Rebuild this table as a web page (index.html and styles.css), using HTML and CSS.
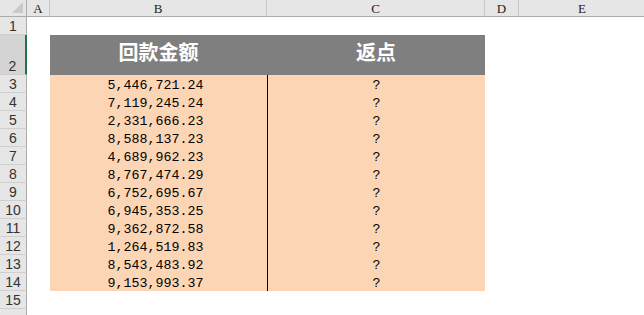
FILE: index.html
```html
<!DOCTYPE html>
<html>
<head>
<meta charset="utf-8">
<link rel="stylesheet" href="styles.css">
</head>
<body>
<div class="sheet">
  <div class="ch corner"><span class="tri"></span></div>
  <div class="ch">A</div>
  <div class="ch">B</div>
  <div class="ch">C</div>
  <div class="ch">D</div>
  <div class="ch last">E</div>

  <div class="rh r1">1</div><div class="c r1"></div><div class="c r1"></div><div class="c r1"></div><div class="c r1"></div><div class="c r1"></div>

  <div class="rh r2 sel">2</div><div class="c r2"></div><div class="c r2 th">回款金额</div><div class="c r2 th">返点</div><div class="c r2"></div><div class="c r2"></div>

  <div class="rh">3</div><div class="c"></div><div class="c num">5,446,721.24</div><div class="c q">?</div><div class="c"></div><div class="c"></div>
  <div class="rh">4</div><div class="c"></div><div class="c num">7,119,245.24</div><div class="c q">?</div><div class="c"></div><div class="c"></div>
  <div class="rh">5</div><div class="c"></div><div class="c num">2,331,666.23</div><div class="c q">?</div><div class="c"></div><div class="c"></div>
  <div class="rh">6</div><div class="c"></div><div class="c num">8,588,137.23</div><div class="c q">?</div><div class="c"></div><div class="c"></div>
  <div class="rh">7</div><div class="c"></div><div class="c num">4,689,962.23</div><div class="c q">?</div><div class="c"></div><div class="c"></div>
  <div class="rh">8</div><div class="c"></div><div class="c num">8,767,474.29</div><div class="c q">?</div><div class="c"></div><div class="c"></div>
  <div class="rh">9</div><div class="c"></div><div class="c num">6,752,695.67</div><div class="c q">?</div><div class="c"></div><div class="c"></div>
  <div class="rh">10</div><div class="c"></div><div class="c num">6,945,353.25</div><div class="c q">?</div><div class="c"></div><div class="c"></div>
  <div class="rh">11</div><div class="c"></div><div class="c num">9,362,872.58</div><div class="c q">?</div><div class="c"></div><div class="c"></div>
  <div class="rh">12</div><div class="c"></div><div class="c num">1,264,519.83</div><div class="c q">?</div><div class="c"></div><div class="c"></div>
  <div class="rh">13</div><div class="c"></div><div class="c num">8,543,483.92</div><div class="c q">?</div><div class="c"></div><div class="c"></div>
  <div class="rh">14</div><div class="c"></div><div class="c num">9,153,993.37</div><div class="c q">?</div><div class="c"></div><div class="c"></div>
  <div class="rh">15</div><div class="c"></div><div class="c"></div><div class="c"></div><div class="c"></div><div class="c"></div>
  <div class="rh"></div><div class="c"></div><div class="c"></div><div class="c"></div><div class="c"></div><div class="c"></div>
</div>
</body>
</html>
```

FILE: styles.css
```css
html, body {
  margin: 0;
  padding: 0;
  background: #ffffff;
  overflow: hidden;
}

.sheet {
  display: grid;
  grid-template-columns: 27px 23px 217px 218px 34px 126px;
  grid-template-rows: 17px 18px 40px repeat(14, 18px);
  width: 645px;
}

.ch {
  background: #e6e6e6;
  border-right: 1px solid #c8c8c8;
  border-bottom: 1px solid #ababab;
  font-family: "Liberation Serif", serif;
  font-size: 13px;
  color: #222;
  display: flex;
  align-items: center;
  justify-content: center;
  box-sizing: border-box;
  padding-top: 1px;
}

.ch.last {
  border-right: none;
}

.corner {
  position: relative;
  border-right: 1px solid #ababab;
}

.tri {
  position: absolute;
  right: 3px;
  bottom: 3px;
  width: 0;
  height: 0;
  border-left: 11px solid transparent;
  border-bottom: 11px solid #c9c9c9;
}

.rh {
  background: #e6e6e6;
  border-right: 1px solid #ababab;
  border-bottom: 1px solid #cfcfcf;
  font-family: "Liberation Sans", sans-serif;
  font-size: 14px;
  color: #333;
  display: flex;
  align-items: flex-end;
  justify-content: center;
  box-sizing: border-box;
  padding-bottom: 1px;
  line-height: 14px;
}

.rh.sel {
  background: #d4d4d4;
  border-right: 2px solid #217346;
}

.c {
  background: #ffffff;
}

.th {
  background: #7f7f7f;
  color: #ffffff;
  font-family: "Noto Sans CJK SC", "Noto Sans", sans-serif;
  font-weight: 700;
  font-size: 20px;
  display: flex;
  align-items: center;
  justify-content: center;
  padding-bottom: 8px;
  box-sizing: border-box;
}

.num, .q {
  background: #fcd5b4;
  font-family: "Liberation Mono", monospace;
  font-size: 13.3px;
  color: #000;
  display: flex;
  align-items: center;
  justify-content: center;
  padding-top: 2px;
  box-sizing: border-box;
}

.num {
  padding-right: 6px;
}

.q {
  border-left: 1px solid #000000;
}
```
